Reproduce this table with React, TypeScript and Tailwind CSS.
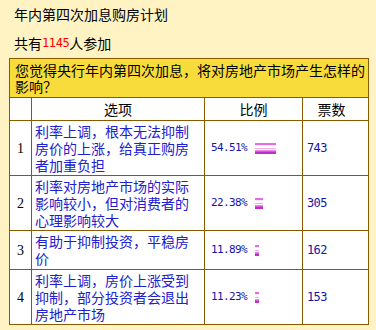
import React from "react";

type Row = { n: string; text: string; pct: string; bar: number; votes: string; h: string };

const rows: Row[] = [
  { n: "1", text: "利率上调，根本无法抑制房价的上涨，给真正购房者加重负担", pct: "54.51%", bar: 21, votes: "743", h: "h-[55px]" },
  { n: "2", text: "利率对房地产市场的实际影响较小，但对消费者的心理影响较大", pct: "22.38%", bar: 8, votes: "305", h: "h-[55px]" },
  { n: "3", text: "有助于抑制投资，平稳房价", pct: "11.89%", bar: 4, votes: "162", h: "h-[39px]" },
  { n: "4", text: "利率上调，房价上涨受到抑制，部分投资者会退出房地产市场", pct: "11.23%", bar: 4, votes: "153", h: "h-[55px]" },
];

export default function App() {
  return (
    <div className="w-[376px] h-[330px] overflow-hidden bg-[#FFF3C4] text-[14px] text-black font-['Noto_Sans_CJK_SC',sans-serif]">
      <div className="pl-[14px] pt-[6px] h-[23px] leading-[17px]">年内第四次加息购房计划</div>
      <div className="pl-[14px] mt-[12px] h-[17px] leading-[17px] flex items-center">
        <span>共有</span>
        <span className="text-[#FF0000] font-['DejaVu_Sans_Mono',monospace] text-[12px] leading-[17px] tracking-[-0.4px]">1145</span>
        <span>人参加</span>
      </div>
      <div className="ml-[9px] mt-[6px] w-[360px] border border-[#8B5A00]">
        <div className="bg-[#F7DC3C] pl-[5px] py-[3px] leading-[16px] h-[38px]">
          您觉得央行年内第四次加息，将对房地产市场产生怎样的影响？
        </div>
        <div className="flex h-[23px] border-t border-[#8B5A00] bg-white leading-[17px]">
          <div className="w-[21px]" />
          <div className="w-[173px] border-l border-[#8B5A00] flex items-center justify-center">选项</div>
          <div className="w-[98px] border-l border-[#8B5A00] flex items-center justify-center">比例</div>
          <div className="flex-1 border-l border-[#8B5A00] flex items-center justify-center pr-[8px]">票数</div>
        </div>
        {rows.map((r) => (
          <div key={r.n} className={`flex ${r.h} border-t border-[#8B5A00] bg-white`}>
            <div className="w-[21px] flex items-center justify-center font-['Liberation_Serif',serif] text-[14px]">{r.n}</div>
            <div className="w-[173px] border-l border-[#8B5A00] flex items-center pl-[3px] pr-[3px] text-[#2020D0] leading-[17px]">
              <div>{r.text}</div>
            </div>
            <div className="w-[98px] border-l border-[#8B5A00] flex items-center pl-[6px]">
              <span className="w-[44px] text-[#1414A8] font-['DejaVu_Sans_Mono',monospace] text-[11px] tracking-[-0.6px]">{r.pct}</span>
              <span
                className="h-[11px] bg-[linear-gradient(to_bottom,#e070e0_0px,#e070e0_2px,#fae0fa_2px,#fae0fa_3px,#ffffff_3px,#ffffff_5px,#f0b0f0_5px,#f0b0f0_6px,#ffffff_6px,#ffffff_7px,#e888e8_7px,#e888e8_8px,#d858d8_8px,#d858d8_9px,#c030c0_9px,#c030c0_11px)]"
                style={{ width: `${r.bar}px` }}
              />
            </div>
            <div className="flex-1 border-l border-[#8B5A00] flex items-center pl-[4px] text-[#1414A8] font-['DejaVu_Sans_Mono',monospace] text-[12px] tracking-[-0.6px]">
              {r.votes}
            </div>
          </div>
        ))}
      </div>
    </div>
  );
}
